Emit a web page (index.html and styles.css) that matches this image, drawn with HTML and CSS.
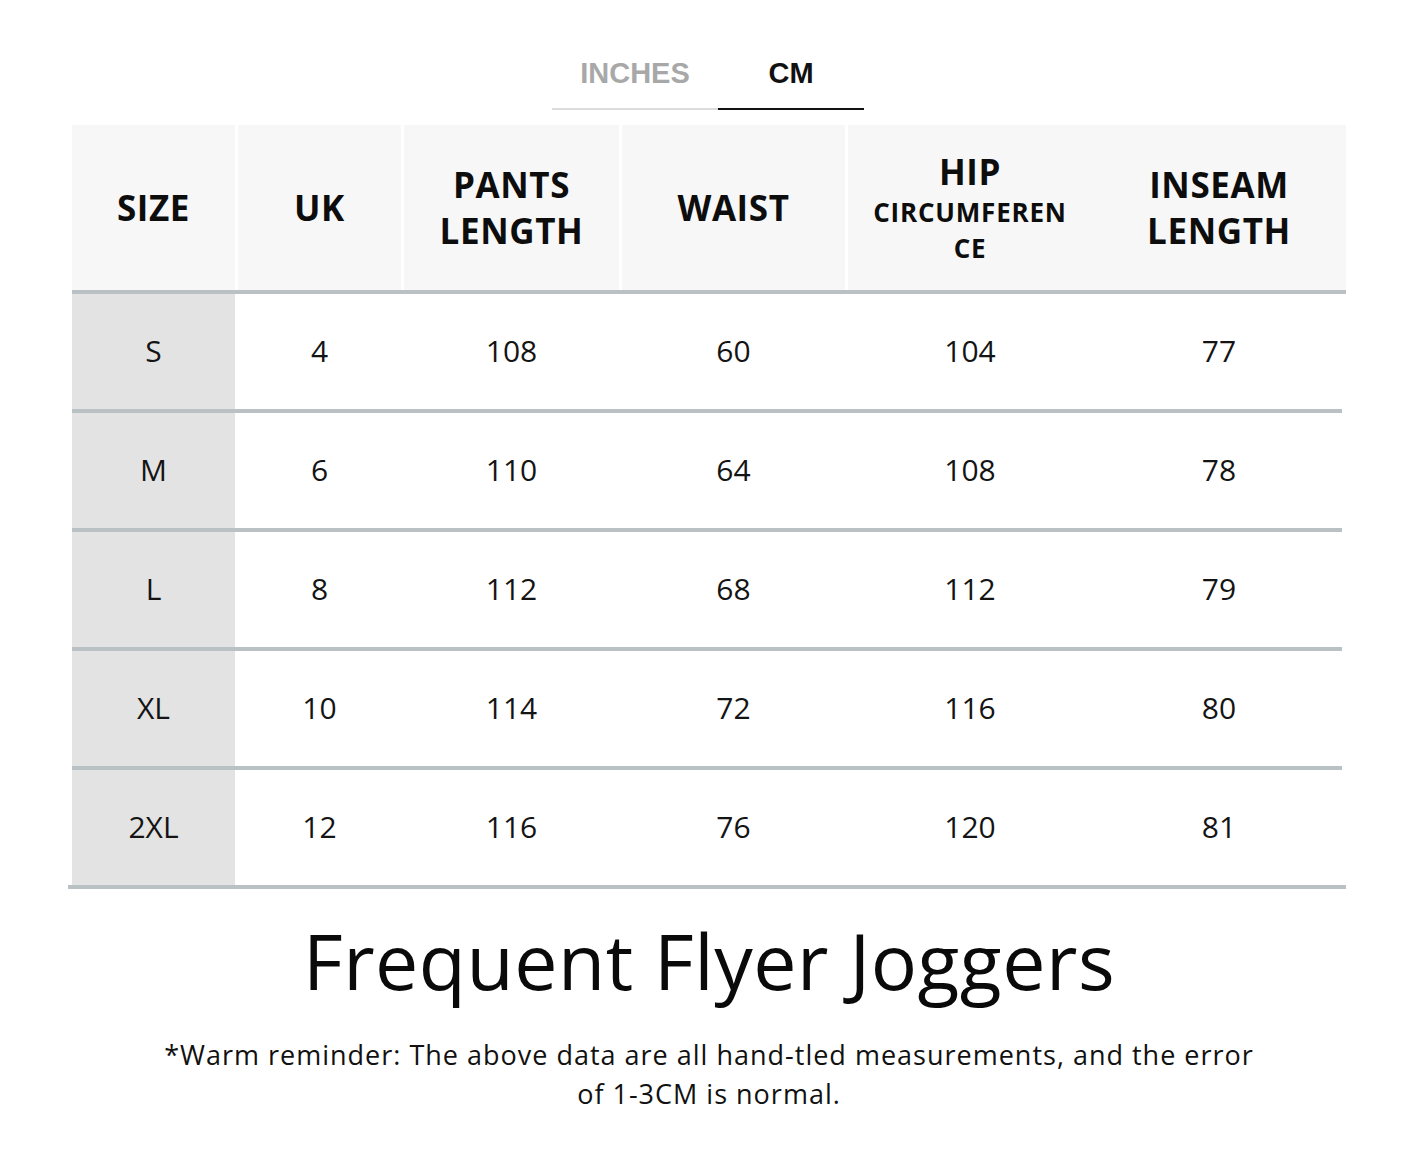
FILE: index.html
```html
<!DOCTYPE html>
<html lang="en">
<head>
<meta charset="utf-8">
<title>Frequent Flyer Joggers – Size Chart</title>
<link rel="stylesheet" href="styles.css">
</head>
<body>
<div class="page">
  <div class="tabs">
    <div class="tab">INCHES</div>
    <div class="tab active">CM</div>
  </div>

  <div class="table">
    <div class="thead">
      <div class="th">SIZE</div>
      <div class="th sep">UK</div>
      <div class="th sep">PANTS<br>LENGTH</div>
      <div class="th sep">WAIST</div>
      <div class="th sep hip"><span class="hip-main">HIP</span><span class="hip-sub">CIRCUMFEREN<br>CE</span></div>
      <div class="th">INSEAM<br>LENGTH</div>
    </div>
    <div class="line head-line"></div>

    <div class="row"><div class="td size">S</div><div class="td sep">4</div><div class="td sep">108</div><div class="td sep">60</div><div class="td sep">104</div><div class="td">77</div></div>
    <div class="line"></div>
    <div class="row"><div class="td size">M</div><div class="td sep">6</div><div class="td sep">110</div><div class="td sep">64</div><div class="td sep">108</div><div class="td">78</div></div>
    <div class="line"></div>
    <div class="row"><div class="td size">L</div><div class="td sep">8</div><div class="td sep">112</div><div class="td sep">68</div><div class="td sep">112</div><div class="td">79</div></div>
    <div class="line"></div>
    <div class="row"><div class="td size">XL</div><div class="td sep">10</div><div class="td sep">114</div><div class="td sep">72</div><div class="td sep">116</div><div class="td">80</div></div>
    <div class="line"></div>
    <div class="row"><div class="td size">2XL</div><div class="td sep">12</div><div class="td sep">116</div><div class="td sep">76</div><div class="td sep">120</div><div class="td">81</div></div>
    <div class="line last-line"></div>
  </div>

  <h1 class="title">Frequent Flyer Joggers</h1>
  <p class="note">*Warm reminder: The above data are all hand-tled measurements, and the error<br>of 1-3CM is normal.</p>
</div>
</body>
</html>
```

FILE: styles.css
```css
* { box-sizing: border-box; }
html, body { margin: 0; padding: 0; background: #ffffff; }
body { font-family: "Open Sans", "Noto Sans", sans-serif; color: #111111; }

.page {
  width: 1414px;
  padding-left: 4px;
  display: flex;
  flex-direction: column;
  align-items: center;
}

/* Tabs */
.tabs {
  display: flex;
  margin-top: 55px;
  margin-left: -2px;
}
.tab {
  font-family: "Liberation Sans", Arial, sans-serif;
  font-weight: 700;
  font-size: 29px;
  line-height: 36px;
  color: #a8a8a8;
  text-align: center;
  width: 166px;
  padding-bottom: 17px;
  border-bottom: 2px solid #dcdcdc;
}
.tab.active {
  width: 146px;
  color: #111111;
  border-bottom: 2px solid #111111;
}

/* Table */
.table {
  margin-top: 15px;
  width: 1274px;
  display: flex;
  flex-direction: column;
}
.thead, .row {
  display: grid;
  grid-template-columns: 163px 166px 218px 226px 247px 254px;
}
.thead { height: 165px; }
.th {
  background: #f7f7f7;
  display: flex;
  flex-direction: column;
  align-items: center;
  justify-content: center;
  text-align: center;
  font-weight: 700;
  font-size: 35px;
  line-height: 46px;
  letter-spacing: 0.6px;
  color: #0d0d0d;
}
.th.sep { border-left: 3px solid #ffffff; }
.hip-main { display: block; line-height: 44px; }
.hip-sub {
  display: block;
  font-size: 26px;
  line-height: 36px;
  letter-spacing: 0.8px;
}

.row { height: 115px; }
.td {
  display: flex;
  align-items: center;
  justify-content: center;
  font-size: 30px;
  font-weight: 400;
  color: #141414;
  padding-bottom: 2px;
}
.td.sep { border-left: 3px solid transparent; }
.td.size { background: #e3e3e3; }

.line {
  height: 4px;
  width: 1270px;
  background: #bac1c4;
}
.head-line { width: 1274px; }
.last-line { width: 1278px; margin-left: -4px; }

/* Footer text */
.title {
  margin: 22px 0 0 0;
  font-weight: 400;
  font-size: 77px;
  line-height: 100px;
  color: #0a0a0a;
  letter-spacing: 0.5px;
}
.note {
  margin: 24px 0 0 0;
  text-align: center;
  font-size: 27px;
  line-height: 39px;
  letter-spacing: 1px;
  color: #111111;
}
```
